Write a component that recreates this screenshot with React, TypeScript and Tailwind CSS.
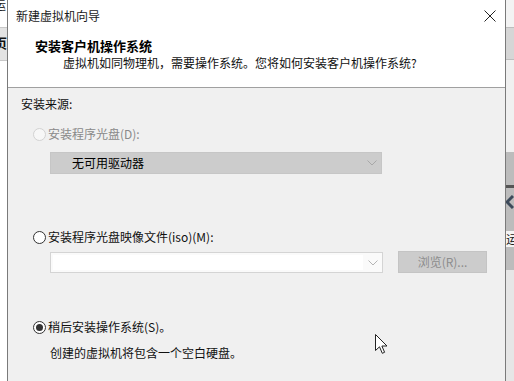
import React from "react";

const font = { fontFamily: '"Noto Sans CJK SC", "Noto Sans", sans-serif' };

function Radio({ state }: { state: "disabled" | "off" | "on" }) {
  if (state === "disabled") {
    return (
      <span className="flex h-[13px] w-[13px] shrink-0 rounded-full border border-[#d2d2d2] bg-[#f7f7f7]" />
    );
  }
  return (
    <span className="flex h-[13px] w-[13px] shrink-0 items-center justify-center rounded-full border border-[#333333] bg-white">
      {state === "on" && <span className="h-[7px] w-[7px] rounded-full bg-[#333333]" />}
    </span>
  );
}

function Chevron({ color }: { color: string }) {
  return (
    <svg width="10" height="6" viewBox="0 0 10 6" fill="none">
      <path d="M0.5 0.5 L5 5 L9.5 0.5" stroke={color} strokeWidth="1" />
    </svg>
  );
}

export default function App() {
  return (
    <div className="relative flex h-[381px] w-[514px] overflow-hidden bg-white text-[12px] text-black" style={font}>
      {/* left strip of background app */}
      <div className="flex w-[7px] shrink-0 flex-col overflow-hidden">
        <div className="relative h-[27px] bg-white">
          <span className="absolute -left-[6px] -top-[3px] text-[12px] leading-[16px] text-[#222]">运</span>
        </div>
        <div className="relative h-[33px] border-t border-[#c8c8c8] bg-[#e3e3e3]">
          <span className="absolute -left-[6px] top-[7px] text-[13px] font-bold leading-[16px] text-[#111]">页</span>
        </div>
        <div className="flex-1 border-t border-[#c8c8c8] bg-white" />
      </div>

      {/* dialog */}
      <div className="flex w-[499px] shrink-0 flex-col border-x border-[#7a7a7a] bg-[#f0f0f0]">
        {/* title bar */}
        <div className="flex h-[31px] items-center justify-between bg-white pl-[8px] pr-[9px]">
          <span className="text-[12px] leading-[16px] text-[#1a1a1a]">新建虚拟机向导</span>
          <svg width="12" height="12" viewBox="0 0 12 12" fill="none">
            <path d="M0.5 0.5 L11.5 11.5 M11.5 0.5 L0.5 11.5" stroke="#222" strokeWidth="1" />
          </svg>
        </div>
        {/* header */}
        <div className="flex h-[57px] flex-col border-b border-[#a0a0a0] bg-white">
          <div className="pl-[27px] pt-[7px] text-[13px] font-bold leading-[16px] text-black">安装客户机操作系统</div>
          <div className="pl-[55px] pt-[1px] text-[12px] leading-[16px] text-[#111]">
            虚拟机如同物理机，需要操作系统。您将如何安装客户机操作系统?
          </div>
        </div>
        {/* body */}
        <div className="flex flex-1 flex-col pl-[13px] pt-[8px]">
          <div className="leading-[16px] text-[#111]">安装来源:</div>

          <div className="ml-[12px] mt-[14px] flex items-center gap-[2px] leading-[16px]">
            <Radio state="disabled" />
            <span className="text-[#8a8a8a]">安装程序光盘(D):</span>
          </div>
          <div className="ml-[29px] mt-[10px] flex h-[22px] w-[332px] items-center justify-between border border-[#c6c6c6] bg-[#cccccc] pl-[21px] pr-[4px]">
            <span className="leading-[16px] text-black">无可用驱动器</span>
            <Chevron color="#a8a8a8" />
          </div>

          <div className="ml-[12px] mt-[55px] flex items-center gap-[2px] leading-[16px]">
            <Radio state="off" />
            <span className="text-[#111]">安装程序光盘映像文件(iso)(M):</span>
          </div>
          <div className="ml-[29px] mt-[6px] flex items-start gap-[15px]">
            <div className="mt-[1px] flex h-[21px] w-[333px] items-center justify-between border border-[#d4d4d4] bg-[#fafafa] pl-[2px] pr-[4px]">
              <div className="h-[15px] w-[310px] bg-white" />
              <Chevron color="#b4b4b4" />
            </div>
            <div className="flex h-[22px] w-[89px] items-center justify-center border border-[#c4c4c4] bg-[#cccccc] leading-[16px] text-[#8d8d8d]">
              浏览(R)...
            </div>
          </div>

          <div className="ml-[12px] mt-[46px] flex items-center gap-[2px] leading-[16px]">
            <Radio state="on" />
            <span className="text-[#111]">稍后安装操作系统(S)。</span>
          </div>
          <div className="ml-[29px] mt-[10px] leading-[16px] text-[#111]">创建的虚拟机将包含一个空白硬盘。</div>
        </div>
      </div>

      {/* right strip of background app */}
      <div className="flex w-[8px] shrink-0 flex-col overflow-hidden">
        <div className="h-[27px] bg-[#f3f3f3]" />
        <div className="h-[33px] border-y border-[#bdbdbd] bg-[#d6d6d6]" />
        <div className="h-[92px] bg-[#f0f0f0]" />
        <div className="relative h-[118px] bg-[#bcbcbc]">
          <div className="absolute left-0 top-[33px] h-[3px] w-[8px] bg-[#555]" />
          <svg className="absolute left-0 top-[43px]" width="8" height="14" viewBox="0 0 8 14">
            <path d="M7 1 L1 7 L7 13" stroke="#3d4a5a" strokeWidth="3" fill="none" />
          </svg>
          <span className="absolute left-0 top-[79px] bg-[#f4f4f4] text-[12px] leading-[16px] text-[#222]">运</span>
        </div>
        <div className="flex-1 bg-[#e6e6e6]" />
      </div>

      {/* mouse cursor */}
      <svg className="absolute left-[375px] top-[334px]" width="14" height="22" viewBox="0 0 14 22">
        <path d="M0.5 0.5 L0.5 16.5 L4.5 12.8 L7.3 19.3 L9.6 18.3 L6.9 12 L12 12 Z" fill="white" stroke="#222" strokeWidth="1" />
      </svg>
    </div>
  );
}
